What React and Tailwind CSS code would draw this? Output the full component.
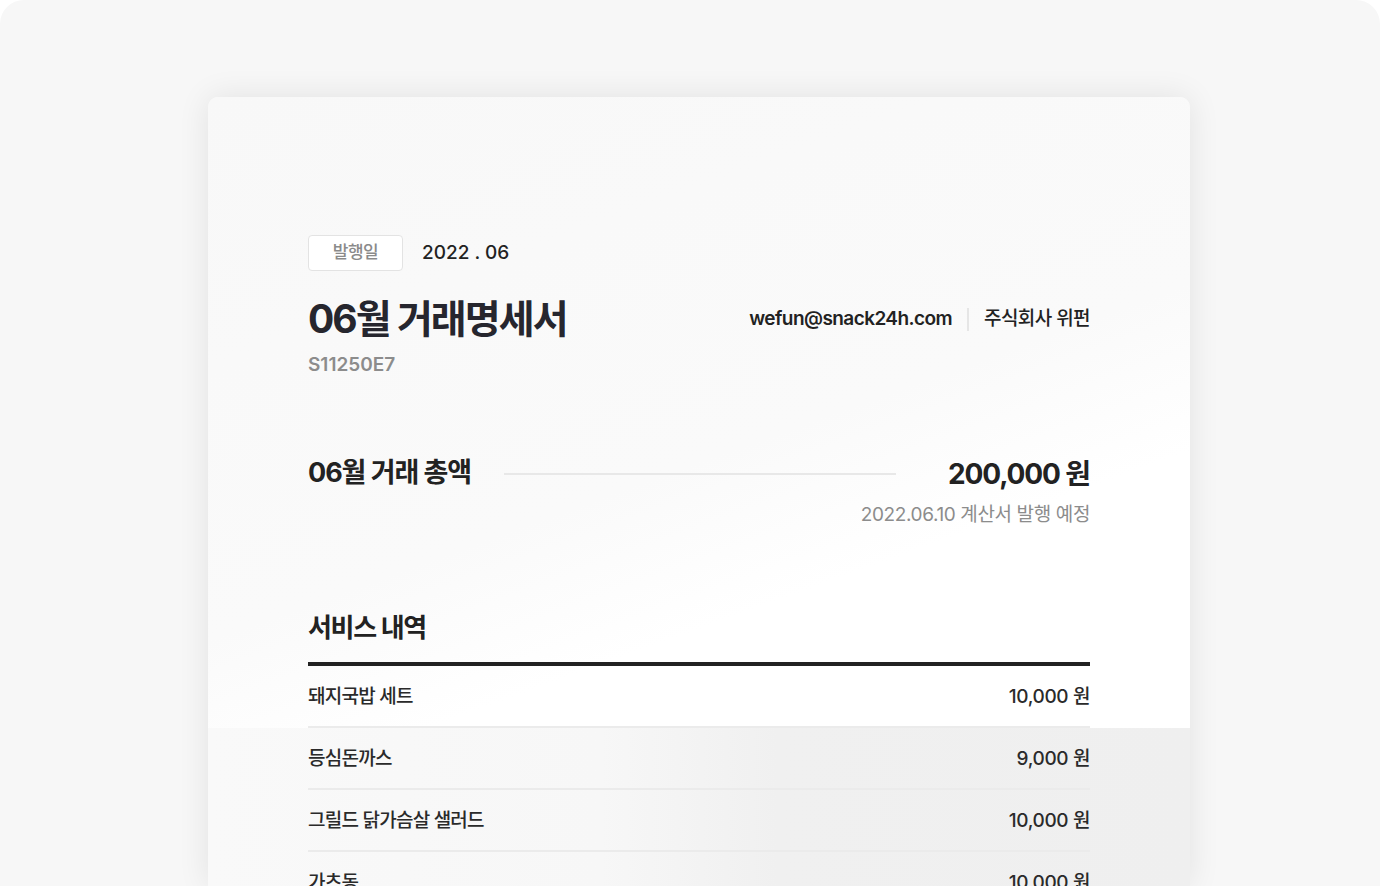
import React from "react";

const items = [
  { name: "돼지국밥 세트", price: "10,000 원" },
  { name: "등심돈까스", price: "9,000 원" },
  { name: "그릴드 닭가슴살 샐러드", price: "10,000 원" },
  { name: "가츠동", price: "10,000 원" },
  { name: "제육볶음 정식", price: "9,000 원" },
];

const font = { fontFamily: "Inter, 'Noto Sans CJK KR', sans-serif" };

const Row = ({ name, price }) => (
  <div className="flex items-center justify-between h-[62px] pt-[2px] border-b-2 border-[#ebebeb] text-[19px] font-medium text-[#2a2a2a]">
    <span className="tracking-[-0.04em]">{name}</span>
    <span className="tracking-[-0.02em]">{price}</span>
  </div>
);

const App = () => {
  const [first, ...rest] = items;

  return (
    <div className="w-full h-[886px] overflow-hidden bg-white" style={font}>
      <div className="h-full bg-[#f7f7f7] rounded-t-[24px] pt-[97px] pl-[208px] flex">
        {/* 명세서 카드 */}
        <div className="w-[982px] rounded-t-[10px] bg-[#f9f9f9] shadow-[0_0_32px_rgba(0,0,0,0.09)] overflow-hidden">
          <div className="px-[100px] pt-[138px] bg-[linear-gradient(160deg,#f8f8f8_0%,#fafafa_55%,#ffffff_72%)]">
            {/* 발행일 */}
            <div className="flex items-center gap-[19px]">
              <span className="w-[95px] h-[36px] flex items-center justify-center border border-[#e3e3e3] rounded-[4px] bg-white text-[17px] font-medium text-[#8a8a8a] tracking-[-0.03em]">
                발행일
              </span>
              <span className="text-[19px] font-medium text-[#222]">2022 . 06</span>
            </div>

            {/* 제목 */}
            <div className="flex items-center justify-between mt-[24px]">
              <h1 className="text-[39px] font-bold text-[#26262e] tracking-[-0.05em] leading-[48px]">
                06월 거래명세서
              </h1>
              <div className="flex items-center text-[19px] font-semibold text-[#222] tracking-[-0.03em]">
                <span>wefun@snack24h.com</span>
                <span className="w-[2px] h-[23px] bg-[#e6e6e6] mx-[15px]" />
                <span className="font-medium">주식회사 위펀</span>
              </div>
            </div>
            <p className="mt-[8px] text-[19px] font-semibold text-[#8c8c8c]">S11250E7</p>

            {/* 거래 총액 */}
            <div className="flex items-center mt-[73px]">
              <span className="text-[27px] font-bold text-[#222] tracking-[-0.04em] whitespace-nowrap">
                06월 거래 총액
              </span>
              <span className="flex-1 h-[2px] bg-[#e8e8e8] ml-[33px] mr-[52px]" />
              <span className="text-[28px] font-bold text-[#222] tracking-[-0.04em] whitespace-nowrap">
                200,000 원
              </span>
            </div>
            <p className="text-right mt-[6px] text-[19px] text-[#8c8c8c] tracking-[-0.02em]">
              2022.06.10 계산서 발행 예정
            </p>

            {/* 서비스 내역 */}
            <h2 className="mt-[82px] text-[26px] font-bold text-[#222] tracking-[-0.05em] leading-[34px]">
              서비스 내역
            </h2>
            <div className="mt-[17px] h-[4px] bg-[#222]" />
            <Row {...first} />
          </div>

          <div className="px-[100px] bg-[linear-gradient(90deg,#f9f9f9_0%,#f7f7f7_40%,#f0f0f0_58%,#efefef_100%)]">
            {rest.map((item) => (
              <Row key={item.name} {...item} />
            ))}
          </div>
        </div>
      </div>
    </div>
  );
};

export default App;
